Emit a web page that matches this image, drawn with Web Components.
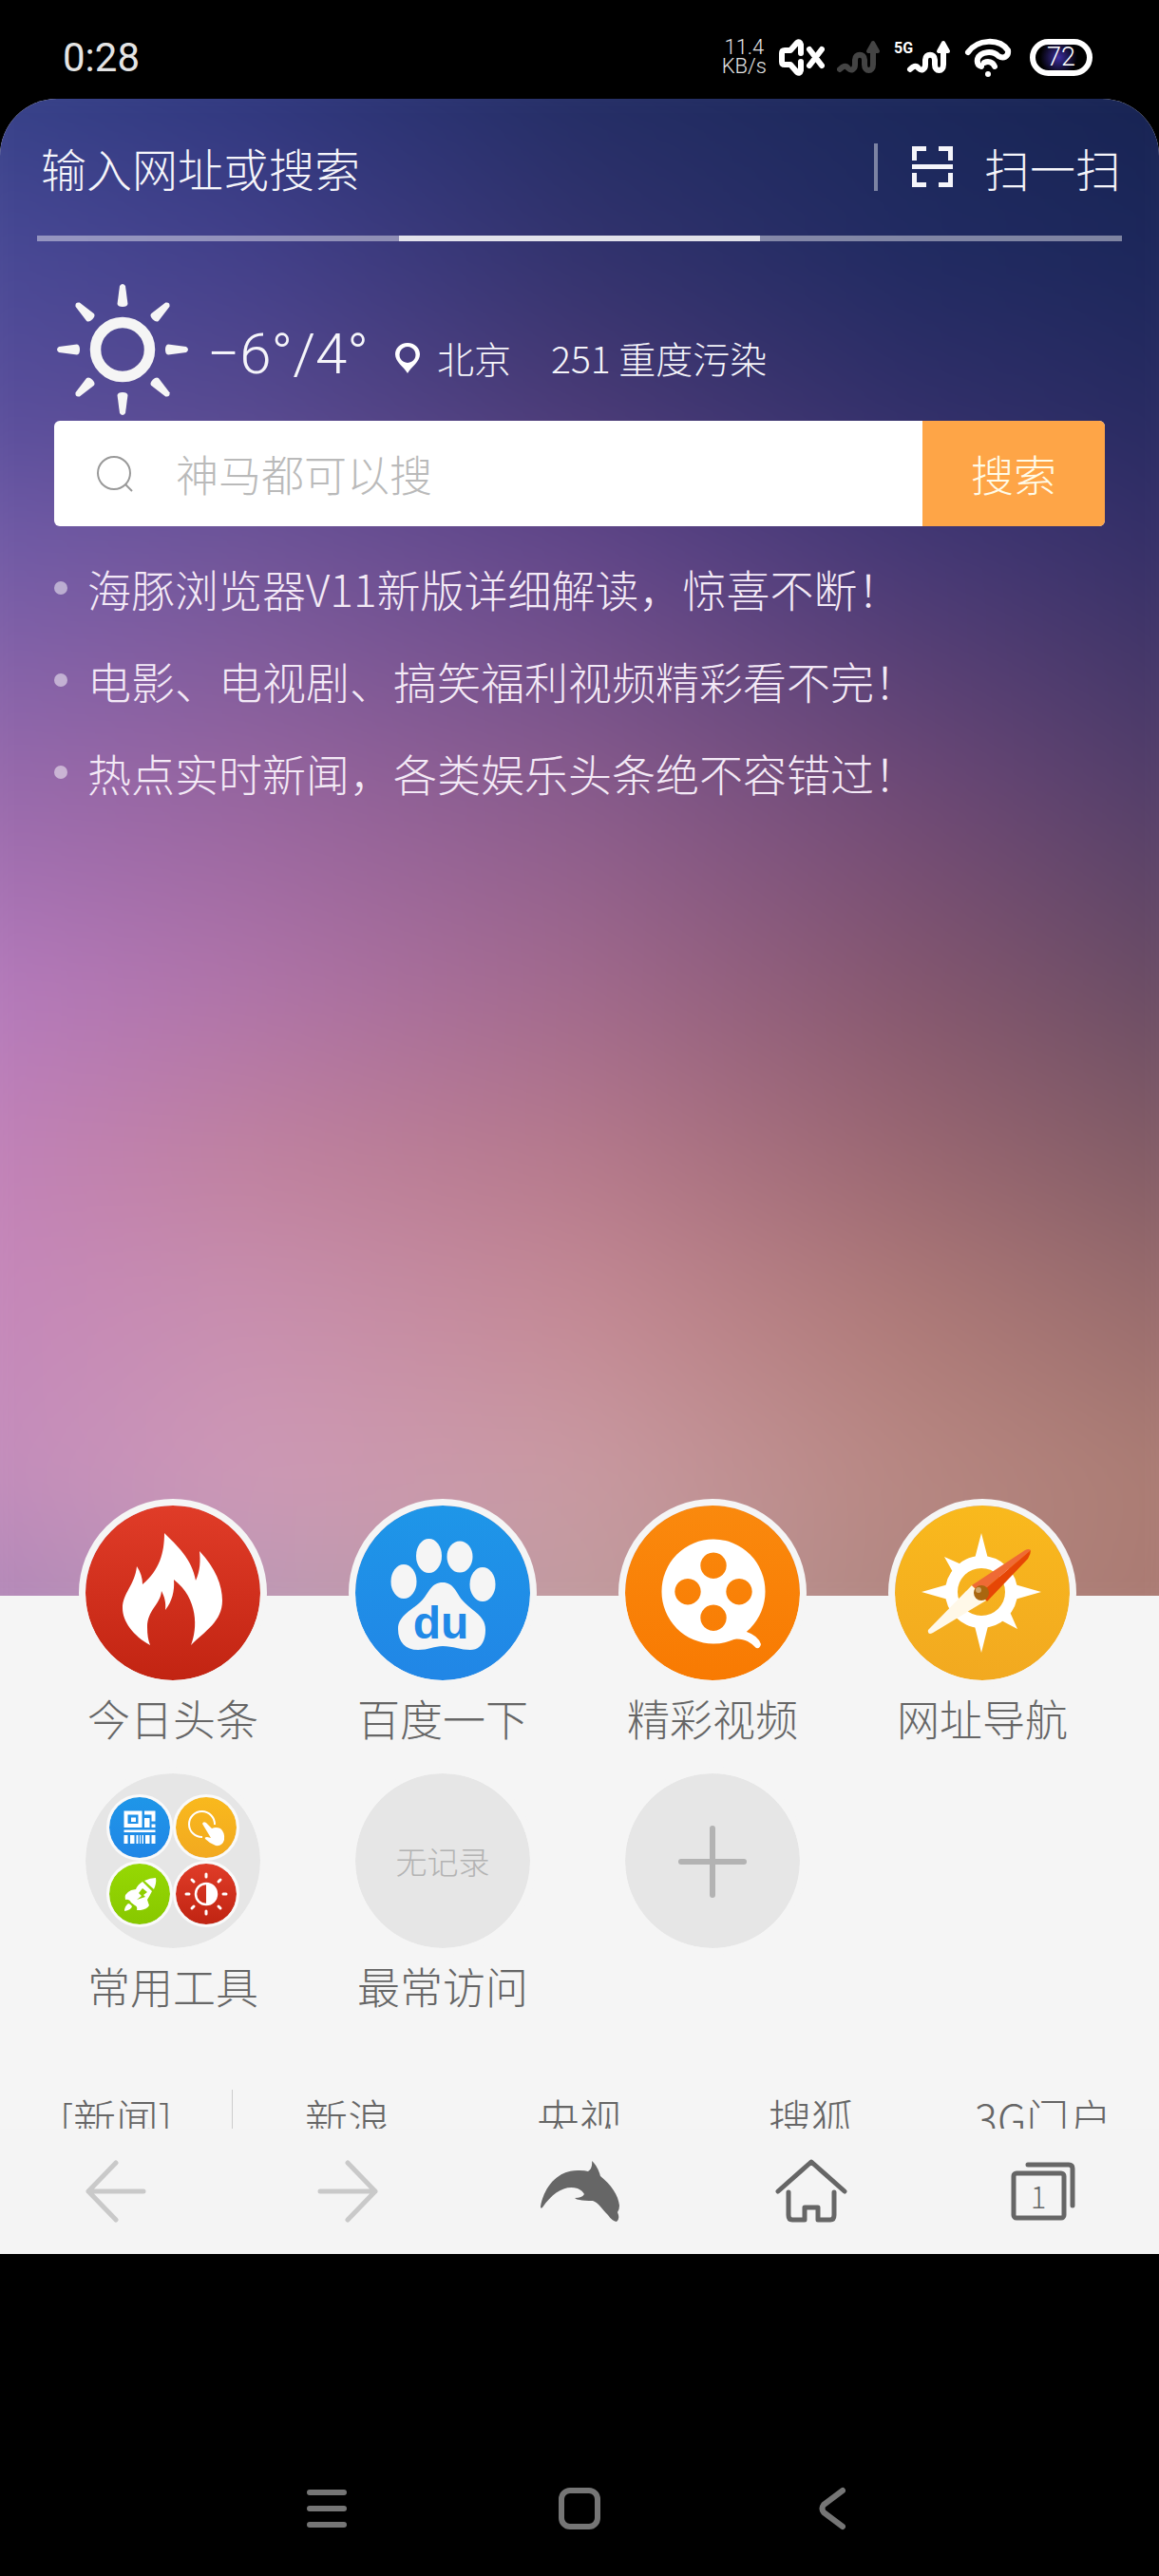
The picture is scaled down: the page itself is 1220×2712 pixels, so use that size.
<!DOCTYPE html>
<html lang="zh-CN">
<head>
    <meta charset="UTF-8">
    <meta name="viewport" content="width=device-width, initial-scale=1">
    <title>海豚浏览器</title>
    <style>
        body {
            margin: 0;
            min-height: 100vh;
            display: flex;
            flex-direction: column;
            background: #000;
            color: #666;
            font-family: "Noto Sans CJK SC", sans-serif;
            font-weight: 300;
        }
        home-page {
            flex: 1;
        }
    </style>
</head>
<body>
<script>
    // Registers an element whose shadow root is cloned from the given markup.
    function define(name, html) {
        const template = document.createElement('template');
        template.innerHTML = html;
        window.customElements.define(name, class extends HTMLElement {
            constructor() {
                super();
                this._shadowRoot = this.attachShadow({mode: 'open'});
                this._shadowRoot.appendChild(template.content.cloneNode(true));
            }
        });
    }

    const ICONS = {
        flame: `<path fill="#fff" d="M83 29C96 42 112 56 116 79C121 68 121 58 120 48C137 66 144 84 144 100C144 122 126 132 111 147C118 130 119 98 93 78C94 90 91 101 84 110C85 102 83 96 80 90C79 104 65 110 65 128C65 136 66 142 68 147C50 137 39 122 39 108C39 92 52 84 54 64C58 70 60 76 60 83C78 68 83 50 83 29Z"/>`,
        paw: `<g fill="#f5f5f5"><ellipse cx="51" cy="80" rx="13.5" ry="18"/><ellipse cx="77.5" cy="53" rx="13.5" ry="18"/><ellipse cx="110" cy="54" rx="13.5" ry="16.5"/><ellipse cx="134" cy="83" rx="13.5" ry="18"/>
            <path d="M92 81C103 81 106 91 112 99C122 111 137 115 137 131C137 144 131 152 121 152C111 152 103 148 92 148C83 148 77 152 66 152C53 152 45 144 45 130C45 115 61 110 71 99C78 91 80 81 92 81Z"/></g>
            <text x="90" y="140" text-anchor="middle" font-family="Liberation Sans, sans-serif" font-weight="700" font-size="48" fill="#2089e7">du</text>`,
        reel: `<path fill="#fff" fill-rule="evenodd" d="M93 35.500a54.500 55 0 1 1 0 110a54.500 55 0 1 1 0-110zM93 49.500a13.700 13.700 0 1 0 .01 0zM66 77a13.700 13.700 0 1 0 .01 0zM120 77a13.700 13.700 0 1 0 .01 0zM93 104.500a13.700 13.700 0 1 0 .01 0z"/>
            <path fill="#fff" d="M120 128L128 133Q140 137 143 146Q142 151 138 150C131 143 124 139 112 141Z"/>`,
        compass: `<path fill="#fff" d="M91 29L98 56L84 56ZM154 91L126 99L126 83ZM91 155L84 127L98 127ZM28 91L56 83L56 99ZM52 54L70 62L61 70ZM129 130L121 112L112 121Z"/>
            <circle cx="91" cy="91" r="31.500" fill="none" stroke="#fff" stroke-width="13"/>
            <path fill="#fff8e8" d="M81 84L96 100L40 134Q34 137 35 131Z"/>
            <path fill="#ef6a35" d="M81 84L137 47Q141 45 143 47L90 92Z"/>
            <path fill="#e64605" d="M143 47Q143 51 140 56L97 101L90 92Z"/>
            <circle cx="91" cy="92" r="8" fill="#a9660f"/><circle cx="88" cy="89" r="3" fill="#d0a468"/>`,
        qr: `<path fill="#fff" fill-rule="evenodd" d="M15.500 14.500h19V32h-19zM19.500 18.500v9.500h11v-9.500zM23 21.500h5v4.500h-5zM37 14.500h11.500v11h-4v-7H37zM37 22h5.500v10H37zM44.500 28.500h4V32h-4zM15.500 34.500h33v2.500h-33zM15.500 40h4v9h-4zM22 40h4.500v9H22zM28.500 40h2v9h-2zM32 40h1v9h-1zM34.500 40h1.500v9h-1.500zM38 40h4.500v9H38zM44.500 40h4v9h-4z"/>`,
        tap: `<path fill="none" stroke="#fff" stroke-width="2" d="M28 42A13.500 13.500 0 1 1 41 29"/><path fill="#fff" d="M28 28Q29 25 32 27L38 33Q42 31 47 33Q52 37 51 45Q49 52 42 51Q36 49 31 44Q30 42 33 42L37 43Z"/>`,
        rocket: `<path fill="#fff" d="M49 15Q50 20 47 27L37 18Q43 15 49 15ZM35 19L45 29Q42 35 40 38L42 44Q40 48 33 49L29 49Q30 45 27 44L23 41Q21 37 17 38Q15 32 23 28L28 27Q30 22 35 19ZM20 42Q22 42 24 45Q23 49 16 50Q16 45 20 42Z"/><path fill="#8fcf00" d="M35 26L40 30L36 33L38 35L29 38L34 34L31 31Z"/>`,
        contrast: `<circle cx="32" cy="32" r="11" fill="none" stroke="#fff" stroke-width="2.500"/><path fill="#fff" d="M32 21a11 11 0 0 1 0 22z"/>
            <path stroke="#fff" stroke-width="3" stroke-linecap="round" d="M32 11v3M32 50v3M11 32h3M50 32h3M17 17l2 2M45 45l2 2M17 47l2-2M45 19l2-2"/>`,
        plus: `<path stroke="#b3b3b3" stroke-width="6" stroke-linecap="round" d="M92 58v70M59 93h66"/>`
    };

    const SQUIGGLE = `<g fill="none" stroke="currentColor" stroke-width="6" stroke-linecap="round" stroke-linejoin="round"><path d="M3 31C6 28 9 26 12 30C15 33 19 31 19 26V21C19 14 29 14 29 21V26C29 34 38 34 38 26V9"/></g><path d="M38 3L33 12h10z" fill="currentColor" stroke="currentColor" stroke-width="4" stroke-linejoin="round"/>`;

    define('status-bar', `
<style>
    :host {
        display: flex;
        align-items: center;
        justify-content: space-between;
        height: 104px;
        padding: 16px 70px 0 66px;
        box-sizing: border-box;
        color: #fff;
        font-family: Roboto, sans-serif;
    }
    .clock {
        font-size: 42px;
        font-weight: 400;
        color: #e4e4e4;
    }
    .tray {
        display: flex;
        align-items: center;
        gap: 13px;
        height: 40px;
    }
    .speed {
        font-size: 22px;
        line-height: 20px;
        text-align: center;
        color: #e4e4e4;
    }
    .dim {
        color: #444;
    }
    .battery {
        display: grid;
        place-items: center;
        width: 66px;
        height: 39px;
        margin-left: 6px;
        box-sizing: border-box;
        border: 6px solid #fff;
        border-radius: 20px;
        background: radial-gradient(circle at 45% 50%, #3d2ea0, #000 60%);
        font-size: 27px;
        line-height: 27px;
    }
</style>
<span class="clock">0:28</span>
<div class="tray">
    <div class="speed">11.4<br>KB/s</div>
    <svg width="48" height="39" fill="none" stroke="#fff" stroke-width="6" stroke-linecap="round" stroke-linejoin="round"><path d="M23 15V6Q22 2 19 4L12 12H6Q3 12 3 15V24Q3 27 6 27H12L19 35Q22 37 23 33V24M32 11L45 28M45 11L32 28"/></svg>
    <svg class="dim" width="47" height="36">${SQUIGGLE}</svg>
    <svg width="61" height="36"><text x="0" y="14" font-size="16" font-weight="700" fill="#fff">5G</text><g transform="translate(14)">${SQUIGGLE}</g></svg>
    <svg width="50" height="41" fill="none" stroke="#fff" stroke-width="6" stroke-linecap="round"><path d="M4 15C14 1 37 0 46 13C47 20 41 22 36 19C30 13 17 14 14 22C13 27 15 29 18 30M21 26C25 24 30 25 32 30"/><circle cx="25" cy="38" r="3" fill="#fff" stroke="none"/></svg>
    <div class="battery">72</div>
</div>
    `);

    // Two-way colour blend: each row is a horizontal gradient that fades in over the row above it.
    class ColourWash extends HTMLElement {
        constructor() {
            super();
            this._shadowRoot = this.attachShadow({mode: 'open'});
            this.rows = [
                [0, '#304085, #28357a, #1e2c62, #1a2758, #14214d'],
                [14, '#4a4b98, #43408a, #33336e, #212b62, #1b2659'],
                [24, '#5b509f, #584a90, #4b3b76, #33306a, #262a60'],
                [31, '#705ca9, #6e5499, #60468a, #443876, #302d64'],
                [47, '#9a6cb0, #98669f, #8a5c8c, #704a76, #4d3c66'],
                [59, '#b67cc0, #b074a8, #a26a8c, #86586f, #644a62'],
                [69, '#c282be, #c0829f, #b67a8c, #9b6872, #7d5a63'],
                [78, '#c586bd, #c88fae, #c48a95, #ae7a78, #94696a'],
                [88, '#c08abd, #ce99b6, #c99aa2, #b88883, #a87a70'],
                [98, '#ab82b8, #b898b4, #c09c9e, #b08680, #a8766e']
            ];
            this.render();
        }

        render() {
            const layers = this.rows.map(([stop, colours], i) => {
                const from = i ? this.rows[i - 1][0] : -1;
                const mask = `linear-gradient(transparent ${from}%, #000 ${stop}%)`;
                return `<div style="background: linear-gradient(to right, ${colours}); mask-image: ${mask}"></div>`;
            });
            // The negative margin keeps the blur's faded rim outside the clipped area.
            this._shadowRoot.innerHTML = `
<style>
    :host {
        display: grid;
        margin: -80px;
        filter: blur(40px);
    }
    div {
        grid-area: 1 / 1;
    }
</style>
${layers.join('')}`;
        }
    }
    window.customElements.define('colour-wash', ColourWash);

    define('address-bar', `
<style>
    :host {
        display: flex;
        align-items: center;
        height: 144px;
        padding: 0 40px 0 43px;
        color: #f5f5fa;
        font-size: 48px;
    }
    input, button {
        padding: 0;
        border: 0;
        background: none;
        color: inherit;
        font: inherit;
    }
    input {
        flex: 1;
        min-width: 0;
        height: 72px;
    }
    input::placeholder {
        color: inherit;
        opacity: 1;
    }
    button {
        display: flex;
        align-items: center;
        gap: 33px;
        height: 50px;
        padding-left: 36px;
        border-left: 4px solid #7c83a3;
    }
</style>
<input type="text" aria-label="网址" placeholder="输入网址或搜索">
<button type="button">
    <svg width="43" height="44" fill="none" stroke="#f5f5fa" stroke-width="5"><path d="M2.500 15V2.500H15M28 2.500H40.500V15M2.500 28V40.500H15M28 40.500H40.500V28M0 21.500H43"/></svg>
    扫一扫
</button>
    `);

    define('page-indicator', `
<style>
    :host {
        display: grid;
        grid-template-columns: repeat(3, 1fr);
        height: 6px;
        margin: 0 39px;
        background: rgba(255, 255, 255, .43);
    }
    i {
        grid-column: 2;
        background: rgba(255, 255, 255, .75);
    }
</style>
<i></i>
    `);

    const RAYS = [0, 45, 90, 135, 180, 225, 270, 315].map(angle =>
        `<path transform="rotate(${angle})" d="M-5.500 -48L-3 -67Q0 -71 3 -67L5.500 -48Q5 -45 0 -45Q-5 -45 -5.500 -48Z"/>`).join('');

    define('weather-line', `
<style>
    :host {
        display: flex;
        align-items: center;
        gap: 20px;
        height: 138px;
        padding: 45px 60px 6px;
        color: #f5f5fa;
    }
    .facts {
        display: flex;
        align-items: baseline;
        padding-top: 12px;
        font-size: 39px;
        line-height: 60px;
    }
    .temp {
        margin-right: 28px;
        font-family: Roboto, sans-serif;
        font-size: 60px;
    }
    .city {
        margin: 0 42px 0 18px;
    }
</style>
<svg width="138" height="138" viewBox="-69 -69 138 138" fill="#f5f5f5"><circle r="28.500" fill="none" stroke="#f5f5f5" stroke-width="11.500"/>${RAYS}</svg>
<div class="facts">
    <span class="temp">−6°/4°</span>
    <svg width="26" height="32"><path fill="#fff" fill-rule="evenodd" d="M13 0C21 0 26 6 26 12C26 20 17 25 13 32C9 25 0 20 0 12C0 6 5 0 13 0ZM13 4a8.500 8.500 0 1 0 .01 0z"/></svg>
    <span class="city">北京</span>
    <span>251 重度污染</span>
</div>
    `);

    define('search-box', `
<style>
    :host {
        display: block;
        margin: 0 57px;
        font-size: 45px;
    }
    form {
        display: flex;
        height: 111px;
        border-radius: 6px;
        background: #fff;
        overflow: hidden;
    }
    label {
        display: grid;
        place-items: center;
        width: 128px;
    }
    input, button {
        border: 0;
        padding: 0;
        font: inherit;
    }
    input {
        flex: 1;
        min-width: 0;
        background: none;
        color: #666;
    }
    input::placeholder {
        color: #bababa;
        opacity: 1;
    }
    button {
        width: 192px;
        background: #fea547;
        color: #fffbe8;
    }
</style>
<form>
    <label for="query" aria-label="搜索"><svg width="38" height="38" fill="none" stroke="#999" stroke-width="2"><circle cx="18" cy="18" r="17"/><path d="M30 30L37 37"/></svg></label>
    <input id="query" type="text" placeholder="神马都可以搜">
    <button type="button">搜索</button>
</form>
    `);

    define('headline-list', `
<style>
    :host {
        display: grid;
        gap: 29px;
        padding: 31px 57px;
        color: #f3e9f6;
        font-size: 46px;
        line-height: 68px;
    }
</style>
<slot></slot>
    `);

    define('headline-item', `
<style>
    :host {
        display: flex;
        align-items: center;
        gap: 21px;
    }
    i {
        width: 14px;
        height: 14px;
        border-radius: 50%;
        background: rgba(255, 255, 255, .5);
    }
    a {
        color: inherit;
        text-decoration: none;
    }
</style>
<i></i><a href="#"><slot></slot></a>
    `);

    // Round shortcut; "icon" names the drawing, "tone" the two gradient colours.
    class AppTile extends HTMLElement {
        constructor() {
            super();
            this._shadowRoot = this.attachShadow({mode: 'open'});
        }

        connectedCallback() {
            const icon = this.getAttribute('icon');
            const tone = this.getAttribute('tone');
            const mini = this.hasAttribute('mini');
            const size = mini ? 64 : 184;
            this._shadowRoot.innerHTML = `
<style>
    :host {
        display: block;
    }
    a {
        display: grid;
        justify-items: center;
        gap: 4px;
        color: #666;
        font-size: 45px;
        line-height: 58px;
        text-decoration: none;
    }
    .disc {
        display: grid;
        place-items: center;
        width: ${size}px;
        height: ${size}px;
        border: ${mini ? 3 : 7}px solid ${mini ? '#fafafa' : '#f5f5f5'};
        border-radius: 50%;
        background: ${tone ? `linear-gradient(${tone})` : '#e6e6e6'} padding-box;
        color: #b3b3b3;
        font-size: 33px;
    }
</style>
<a href="#">
    <div class="disc">${icon ? `<svg width="${size}" height="${size}">${ICONS[icon]}</svg>` : '<slot name="face"></slot>'}</div>
    ${mini ? '' : '<slot></slot>'}
</a>`;
        }
    }
    window.customElements.define('app-tile', AppTile);

    define('tool-folder', `
<style>
    :host {
        display: grid;
        grid-template-columns: 70px 70px;
    }
</style>
<app-tile mini icon="qr" tone="#1e96e8, #2186e6"></app-tile>
<app-tile mini icon="tap" tone="#f9b91d, #f2a920"></app-tile>
<app-tile mini icon="rocket" tone="#96d803, #88c800"></app-tile>
<app-tile mini icon="contrast" tone="#e03c28, #c02412"></app-tile>
    `);

    define('app-grid', `
<style>
    :host {
        display: grid;
        grid-template-columns: repeat(4, 1fr);
        gap: 22px 0;
        padding: 0 44px 0 40px;
    }
</style>
<slot></slot>
    `);

    define('news-strip', `
<style>
    :host {
        display: block;
        height: 41px;
        margin-top: 80px;
        overflow: hidden;
    }
    nav {
        display: grid;
        grid-template-columns: repeat(5, 1fr);
        font-size: 45px;
        line-height: 60px;
        text-align: center;
    }
    a {
        color: inherit;
        text-decoration: none;
    }
    a:first-child {
        box-shadow: 1px 0 #ccc;
    }
</style>
<nav>
    <a href="#">[新闻]</a>
    <a href="#">新浪</a>
    <a href="#">央视</a>
    <a href="#">搜狐</a>
    <a href="#">3G门户</a>
</nav>
    `);

    define('tool-bar', `
<style>
    :host {
        display: grid;
        grid-template-columns: repeat(5, 1fr);
        height: 132px;
        background: #f4f4f4;
    }
    button {
        display: grid;
        place-items: center;
        border: 0;
        padding: 0;
        background: none;
        color: #666;
        font: inherit;
        font-size: 31px;
    }
    button > * {
        grid-area: 1 / 1;
    }
    svg {
        fill: none;
        stroke: #666;
        stroke-width: 5;
        stroke-linecap: round;
        stroke-linejoin: round;
    }
    .off {
        stroke: #c9c9c9;
    }
    .count {
        padding: 8px 10px 0 0;
        line-height: 31px;
    }
</style>
<button type="button" aria-label="后退"><svg class="off" width="64" height="66"><path d="M32 3L3 33L32 63M3 33H61"/></svg></button>
<button type="button" aria-label="前进"><svg class="off" width="64" height="66"><path d="M32 3L61 33L32 63M61 33H3"/></svg></button>
<button type="button" aria-label="菜单"><svg width="88" height="70"><path fill="#666" stroke="none" d="M3 51C7 29 22 12 44 13Q50 13 53 14Q58 11 57 3Q63 8 66 19C77 28 85 39 86 50Q86 54 84 57Q87 64 83 67Q78 66 74 60C68 54 64 47 58 45Q49 45 44 44Q41 44 39 42Q47 42 49 38Q47 34 42 32C29 28 16 36 5 52Q3 54 3 51Z"/></svg></button>
<button type="button" aria-label="主页"><svg width="76" height="68"><path d="M3 34L38 3L73 34M14 35V59Q14 64 18 64H31V51H45V64H58Q62 64 62 59V35"/></svg></button>
<button type="button" aria-label="标签页"><svg width="68" height="62"><rect x="3" y="12" width="53" height="47" rx="3"/><path d="M18 3H61Q65 3 65 7V46"/></svg><span class="count">1</span></button>
    `);

    define('home-page', `
<style>
    :host {
        display: flex;
        flex-direction: column;
        border-radius: 60px 60px 0 0;
        background: #f5f5f5;
        overflow: hidden;
    }
    .hero {
        flex: 1;
        display: grid;
        overflow: hidden;
    }
    .hero > * {
        grid-area: 1 / 1;
    }
    .content {
        z-index: 1;
        min-width: 0;
        padding-bottom: 200px;
    }
    app-grid {
        position: relative;
        z-index: 2;
        margin-top: -102px;
    }
</style>
<div class="hero">
    <colour-wash></colour-wash>
    <div class="content">
        <address-bar></address-bar>
        <page-indicator></page-indicator>
        <weather-line></weather-line>
        <search-box></search-box>
        <headline-list>
            <headline-item>海豚浏览器V11新版详细解读，惊喜不断！</headline-item>
            <headline-item>电影、电视剧、搞笑福利视频精彩看不完！</headline-item>
            <headline-item>热点实时新闻，各类娱乐头条绝不容错过！</headline-item>
        </headline-list>
    </div>
</div>
<app-grid>
    <app-tile icon="flame" tone="#e03c28, #c22412">今日头条</app-tile>
    <app-tile icon="paw" tone="#1e96e8, #2186e6">百度一下</app-tile>
    <app-tile icon="reel" tone="#fa890d, #f87a02">精彩视频</app-tile>
    <app-tile icon="compass" tone="#f9b91d, #f2a920">网址导航</app-tile>
    <app-tile><tool-folder slot="face"></tool-folder>常用工具</app-tile>
    <app-tile><span slot="face">无记录</span>最常访问</app-tile>
    <app-tile icon="plus"></app-tile>
</app-grid>
<news-strip></news-strip>
<tool-bar></tool-bar>
    `);

    define('system-nav', `
<style>
    :host {
        display: grid;
        grid-template-columns: repeat(3, 266px);
        justify-content: center;
        align-items: end;
        height: 339px;
        padding-bottom: 48px;
        box-sizing: border-box;
    }
    button {
        display: grid;
        place-items: center;
        border: 0;
        padding: 0;
        background: none;
    }
    svg {
        fill: none;
        stroke: #757575;
        stroke-width: 6;
        stroke-linecap: round;
        stroke-linejoin: round;
    }
</style>
<button type="button" aria-label="最近任务"><svg width="42" height="46"><path d="M3 6H39M3 23H39M3 40H39"/></svg></button>
<button type="button" aria-label="桌面"><svg width="44" height="46"><rect x="3" y="4" width="38" height="38" rx="9"/></svg></button>
<button type="button" aria-label="返回"><svg width="28" height="46"><path d="M25 4L5 19Q2 23 5 27L25 42"/></svg></button>
    `);
</script>
<status-bar></status-bar>
<home-page></home-page>
<system-nav></system-nav>
</body>
</html>
